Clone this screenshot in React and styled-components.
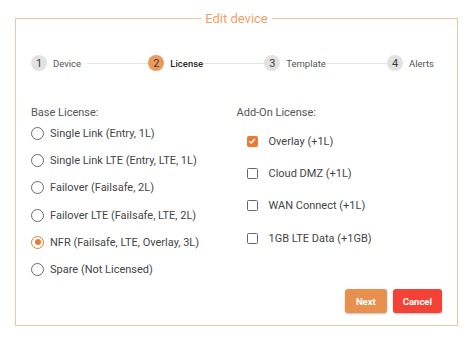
import React, { useState } from "react";
import styled, { createGlobalStyle } from "styled-components";

const GlobalStyle = createGlobalStyle`
  html, body {
    margin: 0;
    padding: 0;
    background: #ffffff;
    font-family: Roboto, "Liberation Sans", sans-serif;
  }
  * {
    box-sizing: border-box;
  }
`;

const steps = ["Device", "License", "Template", "Alerts"];

const baseLicenses = [
  "Single Link (Entry, 1L)",
  "Single Link LTE (Entry, LTE, 1L)",
  "Failover (Failsafe, 2L)",
  "Failover LTE (Failsafe, LTE, 2L)",
  "NFR (Failsafe, LTE, Overlay, 3L)",
  "Spare (Not Licensed)",
];

const addOns = [
  "Overlay (+1L)",
  "Cloud DMZ (+1L)",
  "WAN Connect (+1L)",
  "1GB LTE Data (+1GB)",
];

const Page = styled.div`
  padding: 11px 16px 16px 15px;
`;

const Frame = styled.fieldset`
  margin: 0;
  min-width: 0;
  padding: 0 15px 12px 15px;
  border: 1px solid #f4c5a1;
`;

const Title = styled.legend`
  margin: 0 auto;
  padding: 0 4px;
  font-size: 13px;
  line-height: 15px;
  font-weight: 400;
  color: #f0a266;
`;

const Stepper = styled.div`
  display: flex;
  align-items: center;
  margin-top: 29px;
`;

const Step = styled.div`
  display: flex;
  align-items: center;
  gap: 6px;
  padding-right: ${(p) => (p.last ? "8px" : "0")};
`;

const StepNumber = styled.div`
  width: 16px;
  height: 16px;
  border-radius: 50%;
  display: flex;
  align-items: center;
  justify-content: center;
  font-size: 11px;
  color: #3a3a3a;
  background: ${(p) => (p.active ? "#ec9a5c" : "#e2e2e2")};
`;

const StepLabel = styled.span`
  font-size: 9.5px;
  color: ${(p) => (p.active ? "#2a2a2a" : "#555")};
  font-weight: ${(p) => (p.active ? 500 : 400)};
`;

const Connector = styled.div`
  flex: 1;
  height: 1px;
  background: #e3e3e3;
  margin-left: ${(p) => (p.gap ? "6px" : "0")};
`;

const Columns = styled.div`
  display: grid;
  grid-template-columns: 1fr 1fr;
  margin-top: 35px;
`;

const Column = styled.div`
  display: flex;
  flex-direction: column;
`;

const GroupLabel = styled.div`
  font-size: 11px;
  line-height: 14px;
  color: #555;
  margin-bottom: ${(p) => p.space}px;
`;

const OptionRow = styled.label`
  display: flex;
  align-items: center;
  height: ${(p) => p.h}px;
  padding-left: ${(p) => p.indent || 0}px;
  gap: ${(p) => p.gap}px;
  font-size: 11px;
  color: #454545;
  cursor: pointer;
`;

const RadioDot = styled.span`
  width: 13px;
  height: 13px;
  border-radius: 50%;
  border: 1.3px solid ${(p) => (p.checked ? "#ec7a35" : "#6a6a6a")};
  display: flex;
  align-items: center;
  justify-content: center;
  flex-shrink: 0;

  &::after {
    content: "";
    width: 6px;
    height: 6px;
    border-radius: 50%;
    background: ${(p) => (p.checked ? "#ec7a35" : "transparent")};
  }
`;

const CheckBox = styled.span`
  width: 11px;
  height: 11px;
  border-radius: 1.5px;
  border: 1.5px solid ${(p) => (p.checked ? "#ec7a35" : "#666")};
  background: ${(p) => (p.checked ? "#ec7a35" : "#fff")};
  display: flex;
  align-items: center;
  justify-content: center;
  flex-shrink: 0;
`;

const Actions = styled.div`
  display: flex;
  justify-content: flex-end;
  gap: 6px;
  margin-top: 6px;
`;

const Button = styled.button`
  height: 24px;
  padding: 0 ${(p) => p.pad}px;
  border: none;
  border-radius: 3px;
  font-family: Roboto, "Liberation Sans", sans-serif;
  font-size: 9.5px;
  font-weight: 700;
  color: #fff;
  background: ${(p) => p.bg};
  box-shadow: 0 1px 2px rgba(0, 0, 0, 0.25);
  cursor: pointer;
`;

const App = () => {
  const [base, setBase] = useState(4);
  const [extras, setExtras] = useState([true, false, false, false]);

  const toggle = (i) => {
    const next = [...extras];
    next[i] = !next[i];
    setExtras(next);
  };

  return (
    <Page>
      <GlobalStyle />
      <Frame>
        <Title>Edit device</Title>
        <Stepper>
          {steps.map((s, i) => (
            <React.Fragment key={s}>
              <Step last={i === steps.length - 1}>
                <StepNumber active={i === 1}>{i + 1}</StepNumber>
                <StepLabel active={i === 1}>{s}</StepLabel>
              </Step>
              {i < steps.length - 1 && <Connector gap={i === 0} />}
            </React.Fragment>
          ))}
        </Stepper>
        <Columns>
          <Column>
            <GroupLabel space={0}>Base License:</GroupLabel>
            {baseLicenses.map((l, i) => (
              <OptionRow key={l} h={27.2} gap={6} onClick={() => setBase(i)}>
                <RadioDot checked={base === i} />
                {l}
              </OptionRow>
            ))}
          </Column>
          <Column>
            <GroupLabel space={5}>Add-On License:</GroupLabel>
            {addOns.map((l, i) => (
              <OptionRow key={l} h={32.3} gap={11} indent={10} onClick={() => toggle(i)}>
                <CheckBox checked={extras[i]}>
                  {extras[i] && (
                    <svg width="8" height="8" viewBox="0 0 10 10">
                      <path d="M1.5 5.2 L4 7.6 L8.6 2.4" fill="none" stroke="#fff" strokeWidth="1.8" />
                    </svg>
                  )}
                </CheckBox>
                {l}
              </OptionRow>
            ))}
          </Column>
        </Columns>
        <Actions>
          <Button bg="#e8914f" pad={11}>Next</Button>
          <Button bg="#f44336" pad={10}>Cancel</Button>
        </Actions>
      </Frame>
    </Page>
  );
};

export default App;
